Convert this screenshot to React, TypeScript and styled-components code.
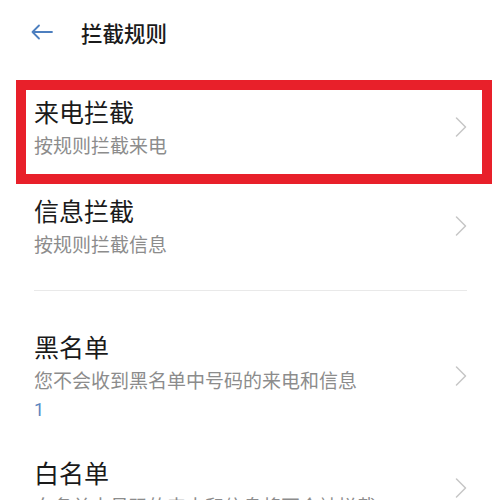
import React from "react";
import styled, { createGlobalStyle } from "styled-components";

const GlobalStyle = createGlobalStyle`
  html, body {
    margin: 0;
    padding: 0;
    background: #ffffff;
  }
  body {
    font-family: "Noto Sans CJK SC", "Noto Sans", sans-serif;
    -webkit-font-smoothing: antialiased;
  }
`;

type Rule = {
  title: string;
  desc: string;
  count?: string;
  highlighted?: boolean;
};

const topRules: Rule[] = [
  { title: "来电拦截", desc: "按规则拦截来电", highlighted: true },
  { title: "信息拦截", desc: "按规则拦截信息" },
];

const listRules: Rule[] = [
  { title: "黑名单", desc: "您不会收到黑名单中号码的来电和信息", count: "1" },
  { title: "白名单", desc: "白名单中号码的来电和信息将不会被拦截" },
];

const Page = styled.div`
  width: 500px;
  height: 500px;
  overflow: hidden;
  background: #ffffff;
`;

const Header = styled.header`
  height: 64px;
  display: flex;
  align-items: center;
  padding-left: 31px;
  gap: 28px;
`;

const BackButton = styled.button`
  border: 0;
  background: none;
  padding: 0;
  display: flex;
  align-items: center;
  cursor: pointer;
`;

const HeaderTitle = styled.h1`
  margin: 0;
  font-size: 21.5px;
  font-weight: 500;
  color: #1b1b1b;
`;

const Group = styled.div<{ $top?: number; $bottom?: number }>`
  padding-top: ${(p) => p.$top ?? 0}px;
  padding-bottom: ${(p) => p.$bottom ?? 0}px;
`;

const Row = styled.div<{ $highlighted?: boolean }>`
  position: relative;
  display: flex;
  align-items: center;
  padding: 16px 33px 15px 34px;

  &::after {
    content: "";
    display: ${(p) => (p.$highlighted ? "block" : "none")};
    position: absolute;
    top: 3px;
    bottom: -8px;
    left: 16px;
    right: 8px;
    border: 10px solid #e8202a;
    pointer-events: none;
    z-index: 1;
  }
`;

const RowText = styled.div`
  flex: 1;
  display: flex;
  flex-direction: column;
`;

const RowTitle = styled.div`
  font-size: 25px;
  line-height: 36px;
  color: #1a1a1a;
`;

const RowDesc = styled.div`
  font-size: 19px;
  line-height: 32px;
  color: #8c8c8c;
  white-space: nowrap;
`;

const RowCount = styled.div`
  font-size: 18px;
  line-height: 27px;
  color: #5a86bf;
  font-family: "Roboto", "Noto Sans", sans-serif;
`;

const Divider = styled.hr`
  border: 0;
  height: 1px;
  background: #e9e9e9;
  margin: 0 33px 0 34px;
`;

const ArrowLeft = () => (
  <svg width="22" height="16" viewBox="0 0 22 16" fill="none">
    <path
      d="M21 8H1.5M8 1.5L1.5 8L8 14.5"
      stroke="#4d7fbf"
      strokeWidth="1.8"
      strokeLinecap="round"
      strokeLinejoin="round"
    />
  </svg>
);

const Chevron = () => (
  <svg width="12" height="20" viewBox="0 0 12 20" fill="none">
    <path
      d="M1.5 1L10.5 10L1.5 19"
      stroke="#c6c6c6"
      strokeWidth="1.5"
      strokeLinecap="round"
      strokeLinejoin="round"
    />
  </svg>
);

const RuleRow = ({ rule }: { rule: Rule }) => (
  <Row $highlighted={rule.highlighted}>
    <RowText>
      <RowTitle>{rule.title}</RowTitle>
      <RowDesc>{rule.desc}</RowDesc>
      {rule.count && <RowCount>{rule.count}</RowCount>}
    </RowText>
    <Chevron />
  </Row>
);

export default function App() {
  return (
    <Page>
      <GlobalStyle />
      <Header>
        <BackButton aria-label="返回">
          <ArrowLeft />
        </BackButton>
        <HeaderTitle>拦截规则</HeaderTitle>
      </Header>
      <Group $top={13} $bottom={15}>
        {topRules.map((r) => (
          <RuleRow key={r.title} rule={r} />
        ))}
      </Group>
      <Divider />
      <Group $top={21}>
        {listRules.map((r) => (
          <RuleRow key={r.title} rule={r} />
        ))}
      </Group>
    </Page>
  );
}
